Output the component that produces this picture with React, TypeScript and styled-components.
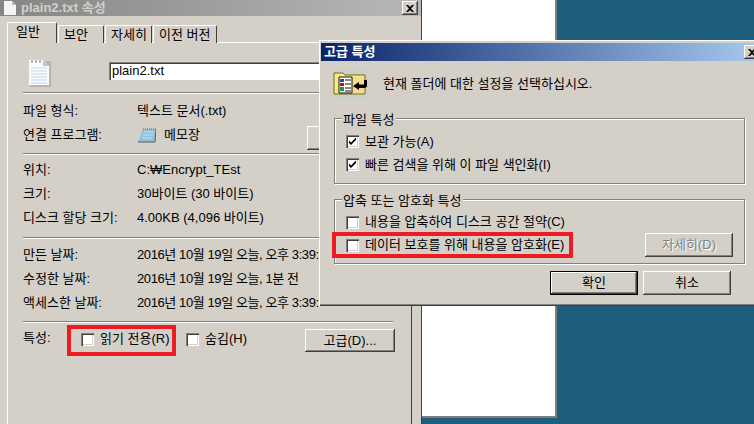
import React from 'react';
import styled, {createGlobalStyle} from 'styled-components';

const Global = createGlobalStyle`
  html, body { margin: 0; padding: 0; background: #1d5e7c; overflow: hidden; }
  * { box-sizing: border-box; }
`;

const raised = `
  box-shadow: inset -1px -1px #404040, inset 1px 1px #fff, inset -2px -2px #808080, inset 2px 2px #d4d0c8;
`;

const Desktop = styled.div`
  position: relative;
  width: 754px;
  height: 424px;
  overflow: hidden;
  background: #1d5e7c;
  color: #000;
  font-family: "Liberation Sans", "Noto Sans CJK KR", sans-serif;
  font-size: 13px;
  line-height: 16px;
  font-kerning: none;
`;

const PropsWindow = styled.section`
  position: absolute;
  left: 0;
  top: 0;
  width: 422px;
  height: 424px;
  display: flex;
  flex-direction: column;
  background: #d4d0c8;
  border-right: 1px solid #404040;
`;

const BackWindow = styled.div`
  position: absolute;
  left: 422px;
  top: 0;
  width: 135px;
  height: 418px;
  background: #fff;
  border-right: 2px solid #7d7d7d;
  border-bottom: 2px solid #7d7d7d;
`;

const TitleBar = styled.header<{ $active?: boolean }>`
  height: ${p => (p.$active ? 18 : 16)}px;
  flex: none;
  display: flex;
  align-items: center;
  gap: 5px;
  font-weight: 700;
  padding-left: ${p => (p.$active ? 3 : 4)}px;
  padding-right: ${p => (p.$active ? 2 : 3)}px;
  color: ${p => (p.$active ? '#fff' : '#d4d0c8')};
  background: ${p => (p.$active
    ? 'linear-gradient(90deg, #0a246a, #a6caf0)'
    : 'linear-gradient(90deg, #858585, #b8b8b8)')};
`;

const CloseButton = styled.span`
  margin-left: auto;
  width: 16px;
  height: 14px;
  flex: none;
  display: flex;
  align-items: center;
  justify-content: center;
  background: #d4d0c8;
  ${raised}
`;

const Tabs = styled.nav`
  display: flex;
  align-items: flex-end;
  height: 20px;
  margin: 7px 0 -1px 7px;
  flex: none;
  position: relative;
  z-index: 1;
`;

const Tab = styled.div<{ $active?: boolean; $width: number }>`
  width: ${p => p.$width}px;
  height: ${p => (p.$active ? 21 : 18)}px;
  padding-left: ${p => (p.$active ? 8 : 5)}px;
  padding-top: 1px;
  margin-right: 1px;
  white-space: nowrap;
  background: #d4d0c8;
  border-top: 1px solid #fff;
  border-left: 1px solid #fff;
  border-right: 1px solid #404040;
  border-radius: 2px 2px 0 0;
`;

const TabPage = styled.div`
  flex: 1;
  width: 405px;
  margin-left: 7px;
  padding: 0 16px 0 15px;
  border-top: 1px solid #fff;
  border-left: 1px solid #fff;
  border-right: 1px solid #404040;
`;

const FileHead = styled.div`
  height: 49px;
  display: flex;
  align-items: flex-start;
  padding: 16px 0 0 5px;
`;

const NameInput = styled.div`
  margin: 3px 0 0 58px;
  width: 282px;
  height: 18px;
  padding: 0 3px;
  background: #fff;
  line-height: 17px;
  box-shadow: inset 1px 1px #808080, inset 2px 2px #404040;
`;

const Divider = styled.hr`
  border: 0;
  margin: 0 2px 0 0;
  height: 2px;
  background: #808080;
  border-bottom: 1px solid #fff;
`;

const InfoGrid = styled.div<{ $top: number; $bottom: number }>`
  display: grid;
  grid-template-columns: 114px 1fr;
  grid-auto-rows: 24px;
  align-items: center;
  padding: ${p => p.$top}px 0 ${p => p.$bottom}px;
  white-space: nowrap;
`;

const DateValue = styled.span`
  display: block;
  width: 182px;
  overflow: hidden;
  letter-spacing: -0.4px;
`;

const ProgramValue = styled.div`
  display: flex;
  align-items: center;
  gap: 8px;
  margin-left: 1px;
`;

const Button = styled.button<{ $default?: boolean }>`
  height: 24px;
  padding: 0;
  font: inherit;
  color: inherit;
  background: #d4d0c8;
  text-align: center;
  border: ${p => (p.$default ? '1px solid #000' : '0')};
  ${raised}
  &:disabled {
    color: #808080;
    text-shadow: 1px 1px 0 #fff;
  }
`;

const ChangeButton = styled(Button)`
  position: absolute;
  left: 307px;
  top: 126px;
  width: 88px;
`;

const AttrRow = styled.div`
  display: flex;
  align-items: flex-start;
  padding-top: 6px;
`;

const AttrLabel = styled.span`
  width: 58px;
  flex: none;
  padding-top: 1px;
`;

const Check = styled.label<{ $width?: number; $height?: number }>`
  display: flex;
  align-items: center;
  gap: 6px;
  height: ${p => p.$height ?? 23}px;
  white-space: nowrap;
  ${p => p.$width && `width: ${p.$width}px; flex: none;`}
`;

const AttrCheck = styled(Check)`
  height: 16px;
  margin-top: 2px;
`;

const Box = styled.span`
  width: 13px;
  height: 13px;
  flex: none;
  display: block;
  background: #fff;
  box-shadow: inset 1px 1px #808080, inset 2px 2px #404040, inset -1px -1px #fff, inset -2px -2px #d4d0c8;
`;

const AdvancedButton = styled(Button)`
  margin-left: auto;
  width: 90px;
  height: 23px;
`;

const Dialog = styled.section`
  position: absolute;
  left: 319px;
  top: 40px;
  width: 446px;
  height: 266px;
  padding: 3px 3px 0 2px;
  background: #d4d0c8;
  box-shadow: inset 1px 1px #fff, inset -1px -1px #404040, inset -2px -2px #808080;
`;

const Intro = styled.div`
  height: 57px;
  display: flex;
  align-items: center;
  gap: 13px;
  padding: 0 0 11px 12px;
`;

const DialogBody = styled.div`
  padding-left: 13px;
`;

const Group = styled.fieldset<{ $height: number }>`
  position: relative;
  width: 411px;
  height: ${p => p.$height}px;
  margin: 0 0 15px;
  padding: 11px 0 0 11px;
  border: 1px solid #808080;
  box-shadow: inset 1px 1px #fff, 1px 1px 0 #fff;
`;

const GroupTitle = styled.span`
  position: absolute;
  left: 7px;
  top: -7px;
  padding: 0 2px 0 1px;
  background: #d4d0c8;
  white-space: nowrap;
`;

const EncryptRow = styled.div`
  display: flex;
  align-items: center;
  height: 24px;
`;

const DetailButton = styled(Button)`
  margin-left: auto;
  margin-right: 11px;
  width: 88px;
`;

const Footer = styled.div`
  display: flex;
  gap: 5px;
  margin: -8px 0 0 216px;
`;

const DialogButton = styled(Button)`
  width: 88px;
`;

const Highlight = styled.div<{ $left: number; $top: number; $w: number; $h: number }>`
  position: absolute;
  left: ${p => p.$left}px;
  top: ${p => p.$top}px;
  width: ${p => p.$w}px;
  height: ${p => p.$h}px;
  border: 4px solid #ed1c24;
`;

const CloseGlyph = () => (
  <svg width="8" height="7" viewBox="0 0 8 7">
    <path d="M0 0h2l2 2 2-2h2L5 3.500 8 7H6L4 5 2 7H0l3-3.500z" fill="#000"/>
  </svg>
);

const Tick = () => (
  <svg width="13" height="13" viewBox="0 0 13 13" style={{display: 'block'}}>
    <path d="M3 5.500v2.500l2 2 5-5V2.500l-5 5z" fill="#000"/>
  </svg>
);

const SmallDoc = () => (
  <svg width="12" height="14" viewBox="0 0 12 14">
    <path d="M0 0h8l4 4v10H0z" fill="#f4f4f4"/>
    <path d="M8 0v4h4z" fill="#b8b8b8"/>
  </svg>
);

const DocIcon = () => (
  <svg width="23" height="28" viewBox="0 0 23 28">
    <path d="M2 2h21v26H2z" fill="#9c9a94" opacity="0.5"/>
    <path d="M1 1h14l6 6v19H1z" fill="#fbfcfd"/>
    <path d="M15 1v6h6z" fill="#bfc3c8"/>
    <path d="M3 9h16M3 12h16M3 15h16M3 18h16M3 21h16M3 24h16" stroke="#c3d5e8" strokeWidth="1"/>
    <path d="M3 2.500h2M7 2.500h2M11 2.500h2" stroke="#9a9a9a" strokeWidth="2"/>
  </svg>
);

const NotepadIcon = () => (
  <svg width="18" height="15" viewBox="0 0 18 15">
    <path d="M5 1h13l-1 13H0z" fill="#8fc0dd"/>
    <path d="M6 4h10M5 7h10M4 10h10" stroke="#c5e2f0" strokeWidth="1"/>
    <path d="M5 1h13" stroke="#4a6a80" strokeWidth="1" strokeDasharray="1 1"/>
    <path d="M0 14h17l1-13" fill="none" stroke="#5b5b5b" strokeWidth="1"/>
  </svg>
);

const FolderIcon = () => (
  <svg width="37" height="30" viewBox="0 0 37 30" style={{background: '#cdd0c8'}}>
    <path d="M1 7V4h9l2 2h20v19H1z" fill="#f6ec83" stroke="#6f6a1c"/>
    <path d="M19 8h12v16H19z" fill="#f7d98f"/>
    <path d="M6 8h13v16H6z" fill="#fff" stroke="#111"/>
    <path d="M7 10h4v3H7z" fill="#2a3fc0"/>
    <path d="M7 14h4v3H7z" fill="#b01818"/>
    <path d="M7 18h4v4H7z" fill="#1f9a2e"/>
    <path d="M12 11h6M12 15h6M12 19h6M12 22h6" stroke="#111"/>
    <path d="M20 17l6-4v2.500h5V11h3v6.500l-2 1.500h-6v2z" fill="#000"/>
  </svg>
);

export default function App() {
  return (
    <Desktop>
      <Global/>
      <BackWindow/>
      <PropsWindow>
        <TitleBar>
          <SmallDoc/>
          <span>plain2.txt 속성</span>
          <CloseButton><CloseGlyph/></CloseButton>
        </TitleBar>
        <Tabs>
          <Tab $active $width={50}>일반</Tab>
          <Tab $width={46}>보안</Tab>
          <Tab $width={47}>자세히</Tab>
          <Tab $width={64}>이전 버전</Tab>
        </Tabs>
        <TabPage>
          <FileHead>
            <DocIcon/>
            <NameInput>plain2.txt</NameInput>
          </FileHead>
          <Divider/>
          <InfoGrid $top={5} $bottom={6}>
            <span>파일 형식:</span>
            <span>텍스트 문서(.txt)</span>
            <span>연결 프로그램:</span>
            <ProgramValue><NotepadIcon/>메모장</ProgramValue>
          </InfoGrid>
          <Divider/>
          <InfoGrid $top={3} $bottom={7}>
            <span>위치:</span>
            <span>C:₩Encrypt_TEst</span>
            <span>크기:</span>
            <span>30바이트 (30 바이트)</span>
            <span>디스크 할당 크기:</span>
            <span>4.00KB (4,096 바이트)</span>
          </InfoGrid>
          <Divider/>
          <InfoGrid $top={4} $bottom={6}>
            <span>만든 날짜:</span>
            <DateValue>2016년 10월 19일 오늘, 오후 3:39:31</DateValue>
            <span>수정한 날짜:</span>
            <DateValue>2016년 10월 19일 오늘, 1분 전</DateValue>
            <span>액세스한 날짜:</span>
            <DateValue>2016년 10월 19일 오늘, 오후 3:39:31</DateValue>
          </InfoGrid>
          <Divider/>
          <AttrRow>
            <AttrLabel>특성:</AttrLabel>
            <AttrCheck $width={105}><Box/>읽기 전용(R)</AttrCheck>
            <AttrCheck><Box/>숨김(H)</AttrCheck>
            <AdvancedButton>고급(D)...</AdvancedButton>
          </AttrRow>
        </TabPage>
        <ChangeButton/>
      </PropsWindow>
      <Highlight $left={67} $top={325} $w={109} $h={31}/>
      <Dialog>
        <TitleBar $active>
          <span>고급 특성</span>
          <CloseButton><CloseGlyph/></CloseButton>
        </TitleBar>
        <Intro>
          <FolderIcon/>
          <span>현재 폴더에 대한 설정을 선택하십시오.</span>
        </Intro>
        <DialogBody>
          <Group $height={66}>
            <GroupTitle>파일 특성</GroupTitle>
            <Check><Box><Tick/></Box>보관 가능(A)</Check>
            <Check><Box><Tick/></Box>빠른 검색을 위해 이 파일 색인화(I)</Check>
          </Group>
          <Group $height={65}>
            <GroupTitle>압축 또는 암호화 특성</GroupTitle>
            <Check $height={22}><Box/>내용을 압축하여 디스크 공간 절약(C)</Check>
            <EncryptRow>
              <Check><Box/>데이터 보호를 위해 내용을 암호화(E)</Check>
              <DetailButton disabled>자세히(D)</DetailButton>
            </EncryptRow>
          </Group>
          <Footer>
            <DialogButton $default>확인</DialogButton>
            <DialogButton>취소</DialogButton>
          </Footer>
        </DialogBody>
      </Dialog>
      <Highlight $left={332} $top={232} $w={241} $h={26}/>
    </Desktop>
  );
}
